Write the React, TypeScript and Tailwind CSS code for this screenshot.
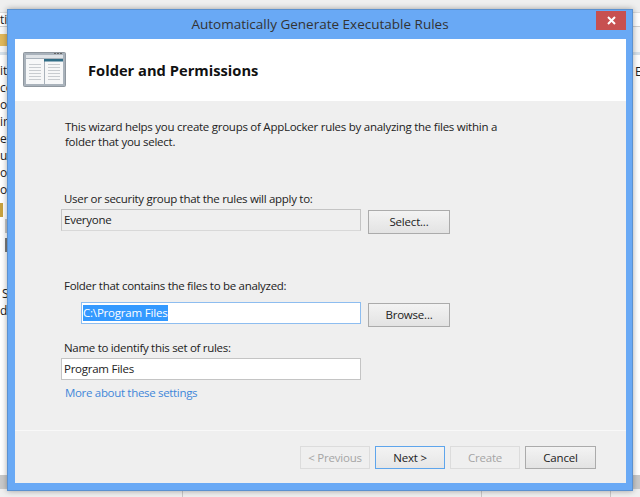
const font = { fontFamily: '"Open Sans","Noto Sans",sans-serif' };

function WizardIcon() {
  return (
    <svg width="44" height="36" viewBox="0 0 44 36" className="shrink-0">
      <rect x="0.5" y="0.5" width="42" height="34" rx="1" fill="#a9b2bb" stroke="#8f979f" />
      <rect x="3" y="3" width="37" height="3" fill="#dfe3e7" />
      <rect x="3" y="7" width="18" height="25" fill="#f6f7f8" />
      <rect x="22" y="7" width="18" height="25" fill="#f6f7f8" />
      <rect x="21" y="7" width="19" height="2.5" fill="#2f6d86" />
      <rect x="31" y="1" width="2" height="1" fill="#666" />
      <rect x="34" y="1" width="2" height="1" fill="#666" />
      <rect x="37" y="1" width="2" height="1" fill="#666" />
      {[12, 15, 18, 21, 24, 27].map((y) => (
        <g key={y}>
          <rect x="6" y={y} width="12" height="1" fill="#c8ccd0" />
          <rect x="25" y={y} width="12" height="1" fill="#c8ccd0" />
        </g>
      ))}
    </svg>
  );
}

function Btn({ label, kind = "normal", w = "w-[82px]", h = "h-[23px]" }: { label: string; kind?: string; w?: string; h?: string }) {
  const cls =
    kind === "disabled"
      ? "border-[#dcdcdc] text-[#a5a5a5] bg-[#efefef]"
      : kind === "default"
        ? "border-[#5ea5ec] text-[#222] bg-gradient-to-b from-[#f3f3f3] to-[#e6e6e6]"
        : "border-[#ababab] text-[#222] bg-gradient-to-b from-[#f3f3f3] to-[#e3e3e3]";
  return (
    <div className={`${w} ${h} shrink-0 border flex items-center justify-center text-[11.5px] tracking-[-0.2px] ${cls}`}>{label}</div>
  );
}

export default function App() {
  const leftRows: [number, string][] = [
    [62, "ity"], [79, "co"], [96, "oc"], [113, "ir"], [130, "et"], [147, "ub"], [164, "of"], [181, "op"],
  ];
  return (
    <div className="relative w-[640px] h-[497px] overflow-hidden bg-[#f0f0f0] text-[12px] text-[#222]" style={font}>
      {/* Background application */}
      <div className="flex flex-col h-full">
        <div className="h-[13px] bg-[#efefef] shrink-0 border-b border-[#dcdcdc]" />
        <div className="h-[14px] bg-white shrink-0 border-b border-[#cfcfcf] text-[12px] leading-[13px] whitespace-nowrap overflow-hidden">
          <span className="text-[#222]">tic</span>
        </div>
        <div className="h-[28px] bg-[#f7f7f7] shrink-0 border-b-[3px] border-[#d7e1ea] flex items-center">
          <div className="w-[7px] h-[12px] bg-[#e2b85a]" />
        </div>
        <div className="flex-1 bg-white" />
        <div className="h-[14px] bg-[#c9c9c9] shrink-0" />
        <div className="h-[8px] bg-[#f0f0f0] shrink-0 flex">
          <div className="ml-[182px] w-[1px] bg-[#c8c8c8]" />
          <div className="ml-[298px] w-[1px] bg-[#c8c8c8]" />
          <div className="ml-[128px] w-[1px] bg-[#c8c8c8]" />
        </div>
      </div>
      {leftRows.map(([y, t]) => (
        <div key={y} className="absolute left-0 text-[12px] leading-[17px] whitespace-nowrap" style={{ top: y }}>{t}</div>
      ))}
      <div className="absolute left-0 top-[203px] w-[3px] h-[14px] bg-[#c9a23e]" />
      <div className="absolute left-[5px] top-[219px] w-[2px] h-[14px] bg-[#c8c8c8]" />
      <div className="absolute left-[5px] top-[238px] w-[2px] h-[14px] bg-[#7c7c7c]" />
      <div className="absolute left-[2px] top-[285px] text-[12px] leading-[17px]">S</div>
      <div className="absolute left-0 top-[302px] text-[12px] leading-[17px]">dv</div>
      <div className="absolute right-0 top-[63px] w-[5px] overflow-hidden text-[12px] leading-[17px]">E</div>

      {/* Dialog */}
      <div className="absolute left-[7px] top-[9px] w-[626px] h-[482px] bg-[#69a9f5] border border-[#5b91d0] flex flex-col shadow-[0_0_6px_rgba(0,0,0,0.35)]">
        <div className="relative h-[29px] shrink-0 flex items-center justify-center text-[13.5px] text-[#333]">
          Automatically Generate Executable Rules
          <div className="absolute right-[6px] top-[1px] w-[30px] h-[19px] bg-[#c75050] flex items-center justify-center">
            <svg width="9" height="9" viewBox="0 0 9 9"><path d="M1 1 L8 8 M8 1 L1 8" stroke="#fff" strokeWidth="2" /></svg>
          </div>
        </div>
        <div className="ml-[7px] mr-[6px] mb-[7px] flex-1 flex flex-col bg-[#efefef]">
          <div className="h-[62px] bg-white shrink-0 flex items-center pl-[8px] gap-[21px]">
            <WizardIcon />
            <div className="text-[14.7px] font-bold text-[#111]">Folder and Permissions</div>
          </div>
          <div className="flex-1 flex flex-col pl-[50px]">
            <div className="mt-[18px] leading-[15px] text-[11.5px] tracking-[-0.26px] w-[450px]">
              This wizard helps you create groups of AppLocker rules by analyzing the files within a folder that you select.
            </div>
            <div className="mt-[42px] -ml-[1px] leading-[15px] text-[11.5px] tracking-[-0.3px]">User or security group that the rules will apply to:</div>
            <div className="mt-[3px] flex items-start gap-[7px] -ml-[4px]">
              <div className="w-[300px] h-[22px] border border-[#c4c4c4] border-b-[#d8d8d8] bg-[#efefef] pl-[2px] leading-[19px] text-[11.5px] tracking-[-0.25px]">Everyone</div>
              <div className="mt-[1px]"><Btn label="Select..." h="h-[24px]" /></div>
            </div>
            <div className="mt-[44px] -ml-[1px] leading-[15px] text-[11.5px] tracking-[-0.3px]">Folder that contains the files to be analyzed:</div>
            <div className="mt-[9px] flex items-start gap-[7px]">
              <div className="ml-[16px] w-[280px] h-[22px] border border-[#8dbdf0] bg-white pl-[1px] pt-[2px] text-[11.5px] tracking-[-0.2px] leading-[16px]">
                <span className="bg-[#3399ff] text-white inline-block pr-[1px]">C:\Program Files</span>
              </div>
              <div className="mt-[1px]"><Btn label="Browse..." h="h-[24px]" /></div>
            </div>
            <div className="mt-[13px] -ml-[1px] leading-[15px] text-[11.5px] tracking-[-0.3px]">Name to identify this set of rules:</div>
            <div className="mt-[3px] -ml-[4px] w-[300px] h-[22px] border border-[#c4c4c4] bg-white pl-[2px] leading-[19px] text-[11.5px] tracking-[-0.25px]">Program Files</div>
            <div className="mt-[5px] leading-[15px] text-[11.5px] tracking-[-0.32px] text-[#3f87d9]">More about these settings</div>
            <div className="mt-[30px] -ml-[50px] h-[1px] bg-[#f8f8f8]" />
            <div className="mt-[15px] flex gap-[5px] pl-[235px]">
              <Btn label="< Previous" kind="disabled" w="w-[70px]" />
              <Btn label="Next >" kind="default" w="w-[70px]" />
              <Btn label="Create" kind="disabled" w="w-[70px]" />
              <Btn label="Cancel" w="w-[71px]" />
            </div>
          </div>
        </div>
      </div>
    </div>
  );
}
